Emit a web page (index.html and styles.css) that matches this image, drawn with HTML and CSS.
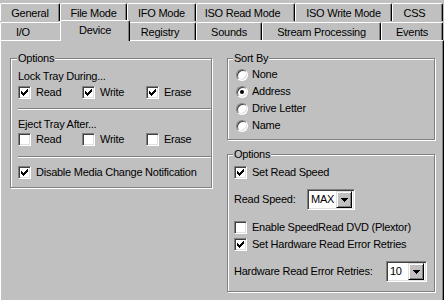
FILE: index.html
```html
<!DOCTYPE html>
<html>
<head>
<meta charset="utf-8">
<title>Device</title>
<link rel="stylesheet" href="styles.css">
</head>
<body>
<div class="sheet">
  <div class="tabrow back">
    <div class="tab t-general">General</div>
    <div class="tab t-filemode">File Mode</div>
    <div class="tab t-ifo">IFO Mode</div>
    <div class="tab t-isoread">ISO Read Mode</div>
    <div class="tab t-isowrite">ISO Write Mode</div>
    <div class="tab t-css">CSS</div>
  </div>
  <div class="tabrow front">
    <div class="tab t-io">I/O</div>
    <div class="tab t-device sel">Device</div>
    <div class="tab t-registry">Registry</div>
    <div class="tab t-sounds">Sounds</div>
    <div class="tab t-stream">Stream Processing</div>
    <div class="tab t-events">Events</div>
  </div>
  <div class="panel">
    <div class="group g-left">
      <span class="gtitle">Options</span>
      <div class="text">Lock Tray During...</div>
      <div class="checks gap3">
        <div class="ck"><span class="cb"><svg width="7" height="7" viewBox="0 0 7 7"><path d="M0 2h1v3H0zM1 3h1v3H1zM2 4h1v3H2zM3 3h1v3H3zM4 2h1v3H4zM5 1h1v3H5zM6 0h1v3H6z" fill="#000"/></svg></span>Read</div>
        <div class="ck"><span class="cb"><svg width="7" height="7" viewBox="0 0 7 7"><path d="M0 2h1v3H0zM1 3h1v3H1zM2 4h1v3H2zM3 3h1v3H3zM4 2h1v3H4zM5 1h1v3H5zM6 0h1v3H6z" fill="#000"/></svg></span>Write</div>
        <div class="ck"><span class="cb"><svg width="7" height="7" viewBox="0 0 7 7"><path d="M0 2h1v3H0zM1 3h1v3H1zM2 4h1v3H2zM3 3h1v3H3zM4 2h1v3H4zM5 1h1v3H5zM6 0h1v3H6z" fill="#000"/></svg></span>Erase</div>
      </div>
      <div class="sep s1"></div>
      <div class="text t2">Eject Tray After...</div>
      <div class="checks gap2">
        <div class="ck"><span class="cb"></span>Read</div>
        <div class="ck"><span class="cb"></span>Write</div>
        <div class="ck"><span class="cb"></span>Erase</div>
      </div>
      <div class="sep s2"></div>
      <div class="ck single"><span class="cb"><svg width="7" height="7" viewBox="0 0 7 7"><path d="M0 2h1v3H0zM1 3h1v3H1zM2 4h1v3H2zM3 3h1v3H3zM4 2h1v3H4zM5 1h1v3H5zM6 0h1v3H6z" fill="#000"/></svg></span>Disable Media Change Notification</div>
    </div>

    <div class="col-right">
      <div class="group g-sort">
        <span class="gtitle r">Sort By</span>
        <div class="rdrow"><span class="rd"></span>None</div>
        <div class="rdrow"><span class="rd on"></span>Address</div>
        <div class="rdrow"><span class="rd"></span>Drive Letter</div>
        <div class="rdrow"><span class="rd"></span>Name</div>
      </div>

      <div class="group g-opts">
        <span class="gtitle r">Options</span>
        <div class="ck"><span class="cb"><svg width="7" height="7" viewBox="0 0 7 7"><path d="M0 2h1v3H0zM1 3h1v3H1zM2 4h1v3H2zM3 3h1v3H3zM4 2h1v3H4zM5 1h1v3H5zM6 0h1v3H6z" fill="#000"/></svg></span>Set Read Speed</div>
        <div class="field f-speed">
          <span class="flabel l-speed">Read Speed:</span>
          <div class="combo c-speed"><span class="cval">MAX</span><span class="cbtn"><svg width="7" height="4" viewBox="0 0 7 4"><path d="M0 0h7v1H0zM1 1h5v1H1zM2 2h3v1H2zM3 3h1v1H3z" fill="#000"/></svg></span></div>
        </div>
        <div class="ck m-speedread"><span class="cb"></span>Enable SpeedRead DVD (Plextor)</div>
        <div class="ck m-hw"><span class="cb"><svg width="7" height="7" viewBox="0 0 7 7"><path d="M0 2h1v3H0zM1 3h1v3H1zM2 4h1v3H2zM3 3h1v3H3zM4 2h1v3H4zM5 1h1v3H5zM6 0h1v3H6z" fill="#000"/></svg></span>Set Hardware Read Error Retries</div>
        <div class="field f-retries">
          <span class="flabel l-retries">Hardware Read Error Retries:</span>
          <div class="combo c-retries"><span class="cval">10</span><span class="cbtn"><svg width="7" height="4" viewBox="0 0 7 4"><path d="M0 0h7v1H0zM1 1h5v1H1zM2 2h3v1H2zM3 3h1v1H3z" fill="#000"/></svg></span></div>
        </div>
      </div>
    </div>
  </div>
</div>
</body>
</html>
```

FILE: styles.css
```css
html, body {
  margin: 0;
  padding: 0;
}
body {
  background: #c0c0c0;
  color: #000;
  font-family: "Liberation Sans", Arial, sans-serif;
  font-size: 11px;
  line-height: 13px;
  letter-spacing: -0.25px;
  width: 444px;
  height: 300px;
  overflow: hidden;
}
.sheet {
  width: 444px;
  height: 300px;
  display: flex;
  flex-direction: column;
}

/* ---------- tabs ---------- */
.tabrow {
  display: flex;
  height: 18px;
  flex: none;
}
.back {
  margin-top: 3px;
}
.front {
  height: 19px;
}
.tab {
  box-sizing: border-box;
  flex: none;
  height: 18px;
  border-top: 1px solid #fff;
  border-left: 1px solid #fff;
  border-right: 1px solid #000;
  box-shadow: inset -1px 0 0 #808080;
  border-radius: 2px 2px 0 0;
  text-align: center;
  padding-top: 3px;
  white-space: nowrap;
  background: #c0c0c0;
}
.front .tab {
  margin-top: 1px;
}
.front .tab.sel {
  margin-top: -1px;
  height: 21px;
  margin-left: -2px;
  margin-right: -2px;
  position: relative;
  z-index: 2;
  padding-top: 3px;
}
.t-general { width: 60px; }
.t-filemode { width: 67px; }
.t-ifo { width: 69px; }
.t-isoread { width: 99px; padding-right: 6px; }
.t-isowrite { width: 97px; }
.t-css { width: 51px; padding-right: 6px; }

.t-io { width: 62px; text-align: left; padding-left: 15px; }
.t-device { width: 70px; }
.t-registry { width: 68px; padding-right: 4px; }
.t-sounds { width: 66px; }
.t-stream { width: 119px; }
.t-events { width: 62px; }

/* ---------- panel ---------- */
.panel {
  flex: 1;
  box-sizing: border-box;
  border-top: 1px solid #fff;
  border-left: 1px solid #fff;
  border-right: 1px solid #000;
  box-shadow: inset -1px 0 0 #808080;
  display: flex;
  align-items: flex-start;
  padding: 17px 0 0 9px;
}

.group {
  position: relative;
  box-sizing: border-box;
  border: 1px solid #808080;
  box-shadow: 1px 1px 0 #fff, inset 1px 1px 0 #fff;
  display: flex;
  flex-direction: column;
}
.gtitle {
  position: absolute;
  top: -7px;
  left: 6px;
  padding: 0 1px;
  background: #c0c0c0;
  white-space: nowrap;
}
.gtitle.r {
  left: 5px;
}

/* left group */
.g-left {
  width: 202px;
  padding: 11px 0 8px 7px;
}
.checks {
  display: grid;
  grid-template-columns: 64px 64px auto;
  height: 13px;
}
.gap3 { margin-top: 3px; }
.gap2 { margin-top: 2px; }
.t2 { margin-top: 8px; }
.sep {
  height: 0;
  border-top: 1px solid #808080;
  border-bottom: 1px solid #fff;
}
.s1 { margin-top: 9px; }
.s2 { margin-top: 10px; }
.single { margin-top: 8px; }

.ck {
  display: flex;
  align-items: center;
  height: 13px;
  white-space: nowrap;
}
.cb {
  box-sizing: border-box;
  flex: none;
  width: 13px;
  height: 13px;
  margin-right: 5px;
  background: #fff;
  border: 1px solid;
  border-color: #808080 #fff #fff #808080;
  box-shadow: inset 1px 1px 0 #404040, inset -1px -1px 0 #dfdfdf;
  display: flex;
  align-items: center;
  justify-content: center;
}
.cb svg {
  display: block;
  shape-rendering: crispEdges;
}

/* right column */
.col-right {
  margin-left: 15px;
  display: flex;
  flex-direction: column;
}
.g-sort {
  width: 208px;
  padding: 9px 0 7px 8px;
  gap: 4px;
}
.rdrow {
  display: flex;
  align-items: center;
  height: 13px;
  white-space: nowrap;
}
.rd {
  box-sizing: border-box;
  flex: none;
  width: 12px;
  height: 12px;
  margin-right: 4px;
  border-radius: 50%;
  background: #fff;
  border: 1px solid;
  border-color: #808080 #fff #fff #808080;
  box-shadow: inset 1px 1px 0 #404040, inset -1px -1px 0 #dfdfdf;
  display: flex;
  align-items: center;
  justify-content: center;
}
.rd.on::after {
  content: "";
  width: 4px;
  height: 4px;
  border-radius: 50%;
  background: #000;
}

.g-opts {
  width: 208px;
  margin-top: 14px;
  padding: 11px 0 9px 6px;
}
.field {
  display: flex;
  align-items: center;
  height: 21px;
}
.f-speed { margin-top: 10px; }
.m-speedread { margin-top: 11px; }
.m-hw { margin-top: 4px; }
.f-retries { margin-top: 10px; }
.flabel {
  flex: none;
  white-space: nowrap;
}
.l-speed { width: 73px; }
.l-retries { width: 152px; }

.combo {
  box-sizing: border-box;
  display: flex;
  align-items: center;
  height: 21px;
  padding: 2px;
  background: #fff;
  border: 1px solid;
  border-color: #808080 #fff #fff #808080;
  box-shadow: inset 1px 1px 0 #404040, inset -1px -1px 0 #dfdfdf;
}
.c-speed { width: 48px; }
.c-retries { width: 41px; }
.cval {
  flex: 1;
  padding-left: 1px;
}
.cbtn {
  box-sizing: border-box;
  flex: none;
  width: 16px;
  height: 17px;
  background: #c0c0c0;
  border: 1px solid;
  border-color: #dfdfdf #000 #000 #dfdfdf;
  box-shadow: inset 1px 1px 0 #fff, inset -1px -1px 0 #808080;
  display: flex;
  align-items: center;
  justify-content: center;
}
.cbtn svg {
  display: block;
  shape-rendering: crispEdges;
}
```
